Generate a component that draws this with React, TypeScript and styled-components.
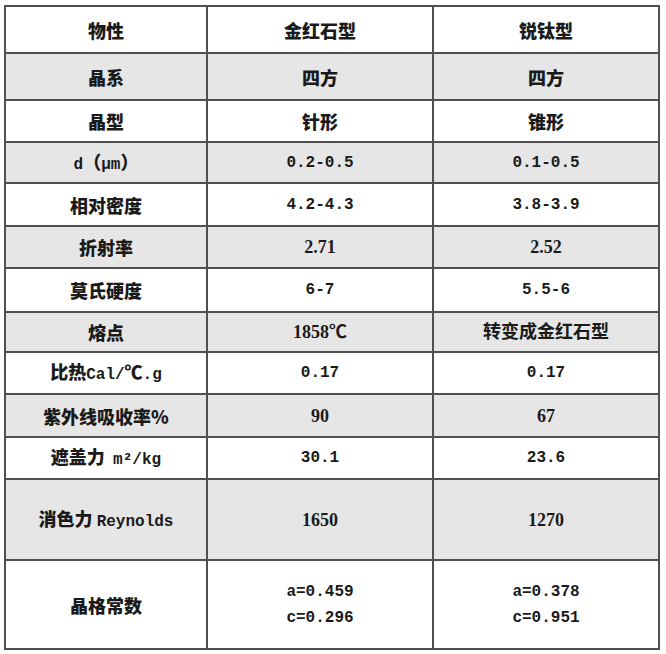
import React from 'react';
import styled, { createGlobalStyle } from 'styled-components';

const GlobalStyle = createGlobalStyle`
  body {
    margin: 0;
    background: #ffffff;
  }
`;

const Page = styled.div`
  padding: 5px 0 0 4px;
`;

const Table = styled.table`
  width: 655px;
  border-collapse: collapse;
  table-layout: fixed;
  color: #1a1a1a;
  font-family: 'Noto Sans CJK SC', sans-serif;
  font-weight: 700;
`;

const Row = styled.tr<{ $shade: boolean }>`
  background-color: ${(p) => (p.$shade ? '#e6e6e6' : '#ffffff')};
`;

const Cell = styled.td<{ $h: number; $font: 'cjk' | 'mono' | 'serif' }>`
  height: ${(p) => p.$h - 2}px;
  padding: 0;
  border: 2px solid #505050;
  text-align: center;
  vertical-align: middle;
  font-size: ${(p) => (p.$font === 'mono' ? 16 : 18)}px;
  font-weight: ${(p) => (p.$font === 'cjk' ? 900 : 700)};
  line-height: 26px;
  font-family: ${(p) =>
    p.$font === 'mono'
      ? "'Liberation Mono', 'Noto Sans CJK SC', monospace"
      : p.$font === 'serif'
      ? "'Liberation Serif', 'Noto Sans CJK SC', serif"
      : "'Noto Sans CJK SC', sans-serif"};
`;

const Label = styled.span`
  font-family: 'Noto Sans CJK SC', sans-serif;
  font-size: 18px;
  font-weight: 900;
`;

const Latin = styled.span`
  font-family: 'Liberation Mono', monospace;
  font-size: 16px;
  font-weight: 700;
`;

type Font = 'cjk' | 'mono' | 'serif';

interface Item {
  label: React.ReactNode;
  rutile: React.ReactNode;
  anatase: React.ReactNode;
  font: Font;
  h: number;
}

const rows: Item[] = [
  { label: '物性', rutile: '金红石型', anatase: '锐钛型', font: 'cjk', h: 47 },
  { label: '晶系', rutile: '四方', anatase: '四方', font: 'cjk', h: 47 },
  { label: '晶型', rutile: '针形', anatase: '锥形', font: 'cjk', h: 42 },
  {
    label: (
      <>
        <Latin>d</Latin>（<Latin>μm</Latin>）
      </>
    ),
    rutile: '0.2-0.5',
    anatase: '0.1-0.5',
    font: 'mono',
    h: 41,
  },
  { label: '相对密度', rutile: '4.2-4.3', anatase: '3.8-3.9', font: 'mono', h: 43 },
  { label: '折射率', rutile: '2.71', anatase: '2.52', font: 'serif', h: 42 },
  { label: '莫氏硬度', rutile: '6-7', anatase: '5.5-6', font: 'mono', h: 44 },
  { label: '熔点', rutile: '1858℃', anatase: '转变成金红石型', font: 'serif', h: 40 },
  {
    label: (
      <>
        比热<Latin>Cal/</Latin>℃<Latin>.g</Latin>
      </>
    ),
    rutile: '0.17',
    anatase: '0.17',
    font: 'mono',
    h: 42,
  },
  { label: '紫外线吸收率%', rutile: '90', anatase: '67', font: 'serif', h: 43 },
  {
    label: (
      <>
        遮盖力&nbsp;&nbsp;<Latin>m²/kg</Latin>
      </>
    ),
    rutile: '30.1',
    anatase: '23.6',
    font: 'mono',
    h: 42,
  },
  {
    label: (
      <>
        消色力 <Latin>Reynolds</Latin>
      </>
    ),
    rutile: '1650',
    anatase: '1270',
    font: 'serif',
    h: 81,
  },
  {
    label: '晶格常数',
    rutile: (
      <>
        a=0.459
        <br />
        c=0.296
      </>
    ),
    anatase: (
      <>
        a=0.378
        <br />
        c=0.951
      </>
    ),
    font: 'mono',
    h: 89,
  },
];

const App: React.FC = () => {
  return (
    <Page>
      <GlobalStyle />
      <Table>
        <colgroup>
          <col style={{ width: 202 }} />
          <col style={{ width: 226 }} />
          <col style={{ width: 226 }} />
        </colgroup>
        <tbody>
          {rows.map((r, i) => (
            <Row key={i} $shade={i % 2 === 1}>
              <Cell $h={r.h} $font="cjk">
                <Label>{r.label}</Label>
              </Cell>
              <Cell $h={r.h} $font={r.font}>
                {r.rutile}
              </Cell>
              <Cell $h={r.h} $font={r.font}>
                {r.anatase}
              </Cell>
            </Row>
          ))}
        </tbody>
      </Table>
    </Page>
  );
};

export default App;
